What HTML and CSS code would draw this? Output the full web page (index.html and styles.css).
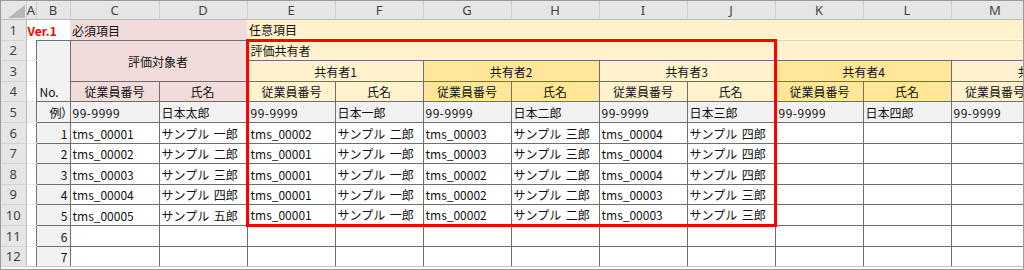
FILE: index.html
```html
<!DOCTYPE html>
<html lang="ja">
<head>
<meta charset="utf-8">
<title>評価共有者</title>
<link rel="stylesheet" href="styles.css">
</head>
<body>
<div class="frame">
<table class="sheet">
<colgroup>
<col class="w-rh"><col class="w-a"><col class="w-b"><col class="w-c">
<col class="w-std"><col class="w-std"><col class="w-std"><col class="w-std"><col class="w-std"><col class="w-std"><col class="w-std"><col class="w-std"><col class="w-std"><col class="w-std"><col class="w-std">
</colgroup>
<tr class="hdr">
<th class="corner"><svg class="tri" width="17" height="13" viewBox="0 0 17 13"><polygon points="17,0 17,13 0,13" fill="#b7b7b7"/></svg></th>
<th class="ch">A</th><th class="ch">B</th><th class="ch">C</th><th class="ch">D</th><th class="ch">E</th><th class="ch">F</th><th class="ch">G</th><th class="ch">H</th><th class="ch">I</th><th class="ch">J</th><th class="ch">K</th><th class="ch">L</th><th class="ch">M</th><th class="ch">N</th>
</tr>
<tr class="h21">
<th class="rh">1</th>
<td colspan="2" class="ver">Ver.1</td>
<td colspan="2" class="pk r1">必須項目</td>
<td colspan="10" class="ly r1 r1y">任意項目</td>
</tr>
<tr class="h20">
<th class="rh">2</th>
<td class="a"></td>
<td rowspan="3" class="gr no">No.</td>
<td colspan="2" rowspan="2" class="pk ctr mid">評価対象者</td>
<td colspan="6" class="ly rt rl rr">評価共有者</td>
<td colspan="4" class="ly top-faint"></td>
</tr>
<tr class="h21">
<th class="rh">3</th>
<td class="a"></td>
<td colspan="2" class="ly ctr rl">共有者1</td>
<td colspan="2" class="dy ctr">共有者2</td>
<td colspan="2" class="ly ctr rr">共有者3</td>
<td colspan="2" class="dy ctr">共有者4</td>
<td colspan="2" class="ly ctr">共有者5</td>
</tr>
<tr class="h20">
<th class="rh">4</th>
<td class="a"></td>
<td class="pk ctr">従業員番号</td><td class="pk ctr">氏名</td>
<td class="ly ctr rl">従業員番号</td><td class="ly ctr">氏名</td>
<td class="dy ctr">従業員番号</td><td class="dy ctr">氏名</td>
<td class="ly ctr">従業員番号</td><td class="ly ctr rr">氏名</td>
<td class="dy ctr">従業員番号</td><td class="dy ctr">氏名</td>
<td class="ly ctr">従業員番号</td><td class="ly ctr">氏名</td>
</tr>
<tr class="h21 ex">
<th class="rh">5</th>
<td class="a"></td>
<td class="gr num ex-label">例）</td>
<td class="code">99-9999</td><td>日本太郎</td>
<td class="rl code">99-9999</td><td>日本一郎</td>
<td class="code">99-9999</td><td>日本二郎</td>
<td class="code">99-9999</td><td class="rr">日本三郎</td>
<td class="code">99-9999</td><td>日本四郎</td>
<td class="code">99-9999</td><td></td>
</tr>
<tr class="h21">
<th class="rh">6</th>
<td class="a"></td>
<td class="gr num">1</td>
<td>tms_00001</td><td>サンプル 一郎</td>
<td class="rl">tms_00002</td><td>サンプル 二郎</td>
<td>tms_00003</td><td>サンプル 三郎</td>
<td>tms_00004</td><td class="rr">サンプル 四郎</td>
<td></td><td></td><td></td><td></td>
</tr>
<tr class="h20">
<th class="rh">7</th>
<td class="a"></td>
<td class="gr num">2</td>
<td>tms_00002</td><td>サンプル 二郎</td>
<td class="rl">tms_00001</td><td>サンプル 一郎</td>
<td>tms_00003</td><td>サンプル 三郎</td>
<td>tms_00004</td><td class="rr">サンプル 四郎</td>
<td></td><td></td><td></td><td></td>
</tr>
<tr class="h21">
<th class="rh">8</th>
<td class="a"></td>
<td class="gr num">3</td>
<td>tms_00003</td><td>サンプル 三郎</td>
<td class="rl">tms_00001</td><td>サンプル 一郎</td>
<td>tms_00002</td><td>サンプル 二郎</td>
<td>tms_00004</td><td class="rr">サンプル 四郎</td>
<td></td><td></td><td></td><td></td>
</tr>
<tr class="h20">
<th class="rh">9</th>
<td class="a"></td>
<td class="gr num">4</td>
<td>tms_00004</td><td>サンプル 四郎</td>
<td class="rl">tms_00001</td><td>サンプル 一郎</td>
<td>tms_00002</td><td>サンプル 二郎</td>
<td>tms_00003</td><td class="rr">サンプル 三郎</td>
<td></td><td></td><td></td><td></td>
</tr>
<tr class="h21">
<th class="rh">10</th>
<td class="a"></td>
<td class="gr num">5</td>
<td>tms_00005</td><td>サンプル 五郎</td>
<td class="rl rb">tms_00001</td><td class="rb">サンプル 一郎</td>
<td class="rb">tms_00002</td><td class="rb">サンプル 二郎</td>
<td class="rb">tms_00003</td><td class="rr rb">サンプル 三郎</td>
<td></td><td></td><td></td><td></td>
</tr>
<tr class="h21">
<th class="rh">11</th>
<td class="a"></td>
<td class="gr num">6</td>
<td></td><td></td><td></td><td></td><td></td><td></td><td></td><td></td><td></td><td></td><td></td><td></td>
</tr>
<tr class="h20 last">
<th class="rh">12</th>
<td class="a"></td>
<td class="gr num">7</td>
<td></td><td></td><td></td><td></td><td></td><td></td><td></td><td></td><td></td><td></td><td></td><td></td>
</tr>
</table>
</div>
</body>
</html>
```
FILE: styles.css
```css
html, body {
  margin: 0;
  padding: 0;
  background: #ffffff;
}

.frame {
  width: 1024px;
  height: 270px;
  box-sizing: border-box;
  border: 1px solid #9a9a9a;
  overflow: hidden;
  background: #ffffff;
}

.sheet {
  border-collapse: collapse;
  table-layout: fixed;
  width: 1126px;
  font-family: "Noto Sans CJK JP", "Noto Sans", sans-serif;
  font-size: 12px;
  color: #111111;
}

.w-rh { width: 25px; }
.w-a { width: 10px; }
.w-b { width: 34px; }
.w-c { width: 89px; }
.w-std { width: 88px; }

.hdr { height: 18px; }
.h20 { height: 20px; }
.h21 { height: 21px; }

.sheet td {
  border: 1px solid #6f6f6f;
  padding: 0 2px 1px 2px;
  line-height: 17px;
  vertical-align: bottom;
  white-space: nowrap;
  overflow: hidden;
  text-align: left;
  font-weight: 400;
  word-spacing: 2px;
}

.sheet td.code {
  letter-spacing: 0.5px;
}

.sheet th {
  padding: 0;
  font-weight: 400;
}

.ch {
  background: #e6e6e6;
  border-right: 1px solid #cdcdcd;
  border-bottom: 1px solid #b9b9b9;
  font-family: "Noto Sans", "Liberation Sans", sans-serif;
  font-size: 13px;
  color: #444444;
  text-align: center;
  vertical-align: middle;
  line-height: 16px;
}

.corner {
  background: #e6e6e6;
  border-right: 1px solid #cdcdcd;
  border-bottom: 1px solid #b9b9b9;
  text-align: right;
  vertical-align: bottom;
  line-height: 0;
}

.tri {
  display: inline-block;
  margin: 0 1px 1px 0;
}

.rh {
  background: #e6e6e6;
  border-right: 1px solid #b9b9b9;
  border-bottom: 1px solid #d3d3d3;
  font-family: "Noto Sans", "Liberation Sans", sans-serif;
  font-size: 13px;
  color: #444444;
  text-align: center;
  vertical-align: middle;
  line-height: 16px;
}

.sheet td.a {
  border-top: none;
  border-left: none;
  border-right: none;
  border-bottom: 1px solid #e6e6e6;
}

.sheet td.ver {
  border: none;
  color: #ff0000;
  font-weight: 700;
  padding-left: 1px;
}

.pk { background: #f2dcdb; }
.ly { background: #fff2cc; }
.dy { background: #ffe699; }
.gr { background: #f2f2f2; }
.ex td { background: #f2f2f2; }

.sheet td.r1 {
  border-top: none;
  border-left: none;
  border-right: none;
}

.sheet td.r1y {
  border-bottom: 1px solid #e2d6b0;
}

.sheet td.top-faint {
  border-top: 1px solid #e2d6b0;
}

.sheet td.ctr { text-align: center; }
.sheet td.mid { vertical-align: middle; padding-bottom: 0; padding-top: 2px; }
.sheet td.num { text-align: right; }
.sheet td.no { padding-left: 3px; }

.ex-label { font-feature-settings: "palt"; }

.sheet td.rt { border-top: 3px solid #ff0000; }
.sheet td.rl { border-left: 3px solid #ff0000; }
.sheet td.rr { border-right: 3px solid #ff0000; }
.sheet td.rb { border-bottom: 3px solid #ff0000; }

.last td { border-bottom: 1px solid #c4c4c4; }
.last td.a { border-bottom: 1px solid #c4c4c4; }
```
